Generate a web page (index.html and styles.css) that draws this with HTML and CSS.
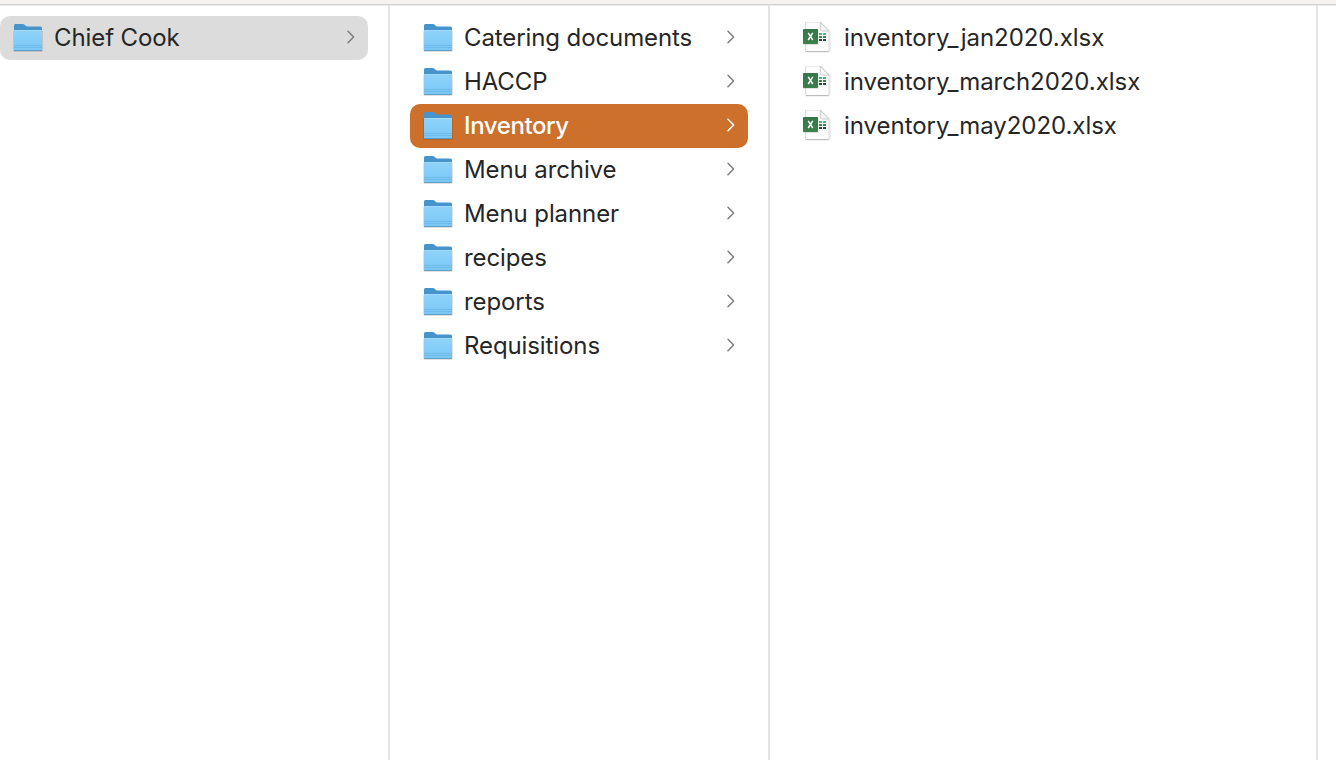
FILE: index.html
```html
<!DOCTYPE html>
<html lang="en">
<head>
    <meta charset="UTF-8">
    <meta name="viewport" content="width=device-width, initial-scale=1.0">
    <title>Inventory</title>
    <link rel="stylesheet" href="styles.css">
</head>
<body>
    <svg class="sprite" width="0" height="0" aria-hidden="true">
        <defs>
            <linearGradient id="folder-front" x1="0" y1="0" x2="0" y2="1">
                <stop offset="0" stop-color="#8fd3fb"/>
                <stop offset="1" stop-color="#7ac7f6"/>
            </linearGradient>
            <linearGradient id="excel-green" x1="0" y1="0" x2="0" y2="1">
                <stop offset="0" stop-color="#37764a"/>
                <stop offset="1" stop-color="#3b8049"/>
            </linearGradient>
        </defs>
        <symbol id="folder" viewBox="0 0 32 32">
            <path d="M1.300 9h29.400v19.200a1.500 1.500 0 0 1-1.500 1.500H2.800a1.500 1.500 0 0 1-1.500-1.500z" fill="#000" opacity=".16"/>
            <path d="M2 28V3.500Q2 2 3.500 2h7.300q1 0 1.800.8l1 1q.7.7 1.700.7H28.500Q30 4.500 30 6v22q0 .9-.9.9H2.900Q2 28.900 2 28z" fill="#4694cb"/>
            <path d="M2 9q0-1 1-1h26q1 0 1 1v18.600q0 .9-.9.9H2.900q-.9 0-.9-.9z" fill="url(#folder-front)"/>
            <path d="M2.500 8.500h27" stroke="#a0dcfc" stroke-width="1"/>
            <path d="M2 23.500h28M2 25.500h28" stroke="#66b5e6" stroke-width="1" opacity=".75"/>
            <path d="M2.500 28.500h27" stroke="#5d9dc8" stroke-width="1"/>
        </symbol>
        <symbol id="chevron" viewBox="0 0 8 14">
            <path d="M1 1.200L6.600 7 1 12.800" fill="none" stroke="currentColor" stroke-width="1.500" stroke-linecap="round" stroke-linejoin="round"/>
        </symbol>
        <symbol id="xlsx" viewBox="0 0 32 32">
            <path d="M5 .5h14L28 9.500v19.300q0 1.200-1.200 1.200H5q-1.200 0-1.200-1.200V1.700Q3.800.5 5 .5z" fill="none" stroke="#000" stroke-width="1.500" opacity=".07"/>
            <path d="M4.500 0h13.800L27 9.500v19q0 1-1 1H4.500q-1 0-1-1V1q0-1 1-1z" fill="#fdfdfd" stroke="#d0d0d0" stroke-width=".8"/>
            <path d="M4 29.500h22.500" stroke="#b5b5b5" stroke-width=".8"/>
            <path d="M18.300.3v6.700q0 2 2 2h6.500z" fill="#f6f6f6" stroke="#c4c4c4" stroke-width=".8"/>
            <path d="M17 11h3v2h-3zM21 11h3v2h-3z" fill="#49b37b"/>
            <path d="M17 14h3v2h-3zM21 14h3v2h-3z" fill="#34844f"/>
            <path d="M17 17h3v2h-3zM21 17h3v2h-3z" fill="#22503a"/>
            <rect x="1" y="7.500" width="15.500" height="15.300" rx="1" fill="#000" opacity=".14"/>
            <rect x="1" y="7" width="15" height="15" rx="1" fill="url(#excel-green)"/>
            <path d="M6.200 10.800l4.600 7.200M10.800 10.800L6.200 18" stroke="#fff" stroke-width="1.500"/>
        </symbol>
    </svg>

    <div class="toolbar-edge"></div>
    <main class="browser">
        <ul class="column column-first">
            <li class="row row-open">
                <svg class="icon"><use href="#folder"/></svg>
                <span class="name">Chief Cook</span>
                <svg class="chevron"><use href="#chevron"/></svg>
            </li>
        </ul>
        <ul class="column">
            <li class="row">
                <svg class="icon"><use href="#folder"/></svg>
                <span class="name">Catering documents</span>
                <svg class="chevron"><use href="#chevron"/></svg>
            </li>
            <li class="row">
                <svg class="icon"><use href="#folder"/></svg>
                <span class="name">HACCP</span>
                <svg class="chevron"><use href="#chevron"/></svg>
            </li>
            <li class="row row-selected">
                <svg class="icon"><use href="#folder"/></svg>
                <span class="name">Inventory</span>
                <svg class="chevron"><use href="#chevron"/></svg>
            </li>
            <li class="row">
                <svg class="icon"><use href="#folder"/></svg>
                <span class="name">Menu archive</span>
                <svg class="chevron"><use href="#chevron"/></svg>
            </li>
            <li class="row">
                <svg class="icon"><use href="#folder"/></svg>
                <span class="name">Menu planner</span>
                <svg class="chevron"><use href="#chevron"/></svg>
            </li>
            <li class="row">
                <svg class="icon"><use href="#folder"/></svg>
                <span class="name">recipes</span>
                <svg class="chevron"><use href="#chevron"/></svg>
            </li>
            <li class="row">
                <svg class="icon"><use href="#folder"/></svg>
                <span class="name">reports</span>
                <svg class="chevron"><use href="#chevron"/></svg>
            </li>
            <li class="row">
                <svg class="icon"><use href="#folder"/></svg>
                <span class="name">Requisitions</span>
                <svg class="chevron"><use href="#chevron"/></svg>
            </li>
        </ul>
        <ul class="column column-files">
            <li class="row">
                <svg class="icon"><use href="#xlsx"/></svg>
                <span class="name">inventory_jan2020.xlsx</span>
            </li>
            <li class="row">
                <svg class="icon"><use href="#xlsx"/></svg>
                <span class="name">inventory_march2020.xlsx</span>
            </li>
            <li class="row">
                <svg class="icon"><use href="#xlsx"/></svg>
                <span class="name">inventory_may2020.xlsx</span>
            </li>
        </ul>
    </main>
</body>
</html>
```
FILE: styles.css
```css
* {
    margin: 0;
    padding: 0;
    box-sizing: border-box;
}

body {
    font-family: Inter, "Liberation Sans", sans-serif;
    font-size: 24px;
    letter-spacing: -0.1px;
    background-color: #fff;
    color: #262626;
    display: flex;
    flex-direction: column;
    height: 100vh;
    overflow: hidden;
}

.sprite {
    flex: none;
}

.toolbar-edge {
    height: 5px;
    flex: none;
    background-color: #f4f3f2;
    border-bottom: 1px solid #d3d2d1;
    box-shadow: 0 1px 0 #eeeeee;
}

.browser {
    flex: 1;
    display: grid;
    grid-template-columns: 390px 380px 548px;
}

.column {
    list-style: none;
    padding: 11px 20px 0;
    border-right: 2px solid #e3e3e3;
}

.column-first {
    padding-left: 0;
}

.column-files {
    letter-spacing: -0.04px;
}

.row {
    display: flex;
    align-items: center;
    gap: 10px;
    height: 44px;
    padding: 0 13px 0 12px;
    border-radius: 10px;
}

.row-open {
    background-color: #dcdcdc;
}

.row-selected {
    background-color: #cc702c;
    color: #fff;
    font-weight: 500;
    letter-spacing: -0.4px;
}

.icon {
    width: 32px;
    height: 32px;
    flex: none;
    overflow: visible;
}

.name {
    flex: 1;
    padding-bottom: 2px;
    white-space: nowrap;
}

.chevron {
    width: 8px;
    height: 14px;
    flex: none;
    margin-bottom: 2px;
    color: #7d7d7d;
}

.row-selected .chevron {
    color: #fff;
}
```
